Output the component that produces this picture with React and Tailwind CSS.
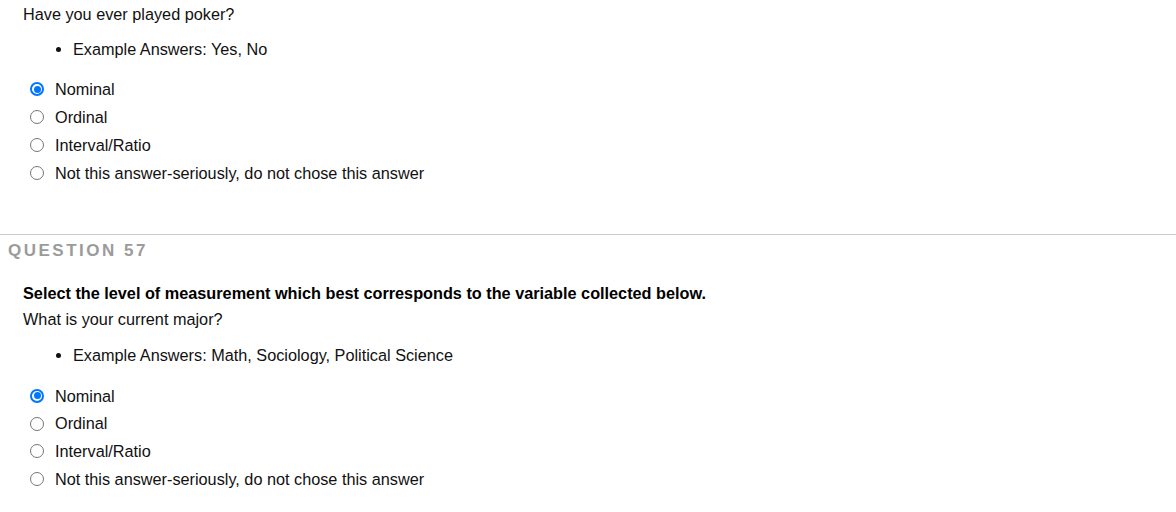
const options = [
  "Nominal",
  "Ordinal",
  "Interval/Ratio",
  "Not this answer-seriously, do not chose this answer",
];

function Radio({ checked }) {
  if (checked) {
    return (
      <span className="flex h-[14px] w-[14px] shrink-0 items-center justify-center rounded-full border-2 border-[#0075ff] bg-white">
        <span className="h-[7px] w-[7px] rounded-full bg-[#0075ff]" />
      </span>
    );
  }
  return <span className="h-[14px] w-[14px] shrink-0 rounded-full border border-[#767676] bg-white" />;
}

function Choices({ selected, className, rowClass }) {
  return (
    <div className={className}>
      {options.map((label, i) => (
        <div key={label} className={`flex items-center ${rowClass}`}>
          <span className="ml-[7px] mr-[11px] flex">
            <Radio checked={i === selected} />
          </span>
          <span>{label}</span>
        </div>
      ))}
    </div>
  );
}

export default function App() {
  return (
    <div className="min-h-screen w-[1176px] bg-white text-[16.25px] text-[#111] font-['Liberation_Sans',Arial,sans-serif]">
      {/* tail of previous question */}
      <div className="pl-[23px] pt-[4px]">
        <p className="leading-[20px]">Have you ever played poker?</p>
        <ul className="mt-[15px] list-disc pl-[50px] leading-[20px]">
          <li>Example Answers: Yes, No</li>
        </ul>
        <Choices selected={0} className="mt-[16px]" rowClass="h-[28px]" />
      </div>

      {/* Question 57 */}
      <div className="mt-[47px] border-t border-[#cccccc] pl-[8px] pt-[6px]">
        <h3 className="text-[17px] font-bold leading-[20px] tracking-[2.5px] text-[#9b9b9b]">QUESTION 57</h3>
      </div>
      <div className="pl-[23px] pt-[19px]">
        <p className="font-bold leading-[26px] text-black">
          Select the level of measurement which best corresponds to the variable collected below.
        </p>
        <p className="leading-[26px]">What is your current major?</p>
        <ul className="mt-[13px] list-disc pl-[50px] leading-[20px]">
          <li>Example Answers: Math, Sociology, Political Science</li>
        </ul>
        <Choices selected={0} className="mt-[17px]" rowClass="h-[27.7px]" />
      </div>
    </div>
  );
}
